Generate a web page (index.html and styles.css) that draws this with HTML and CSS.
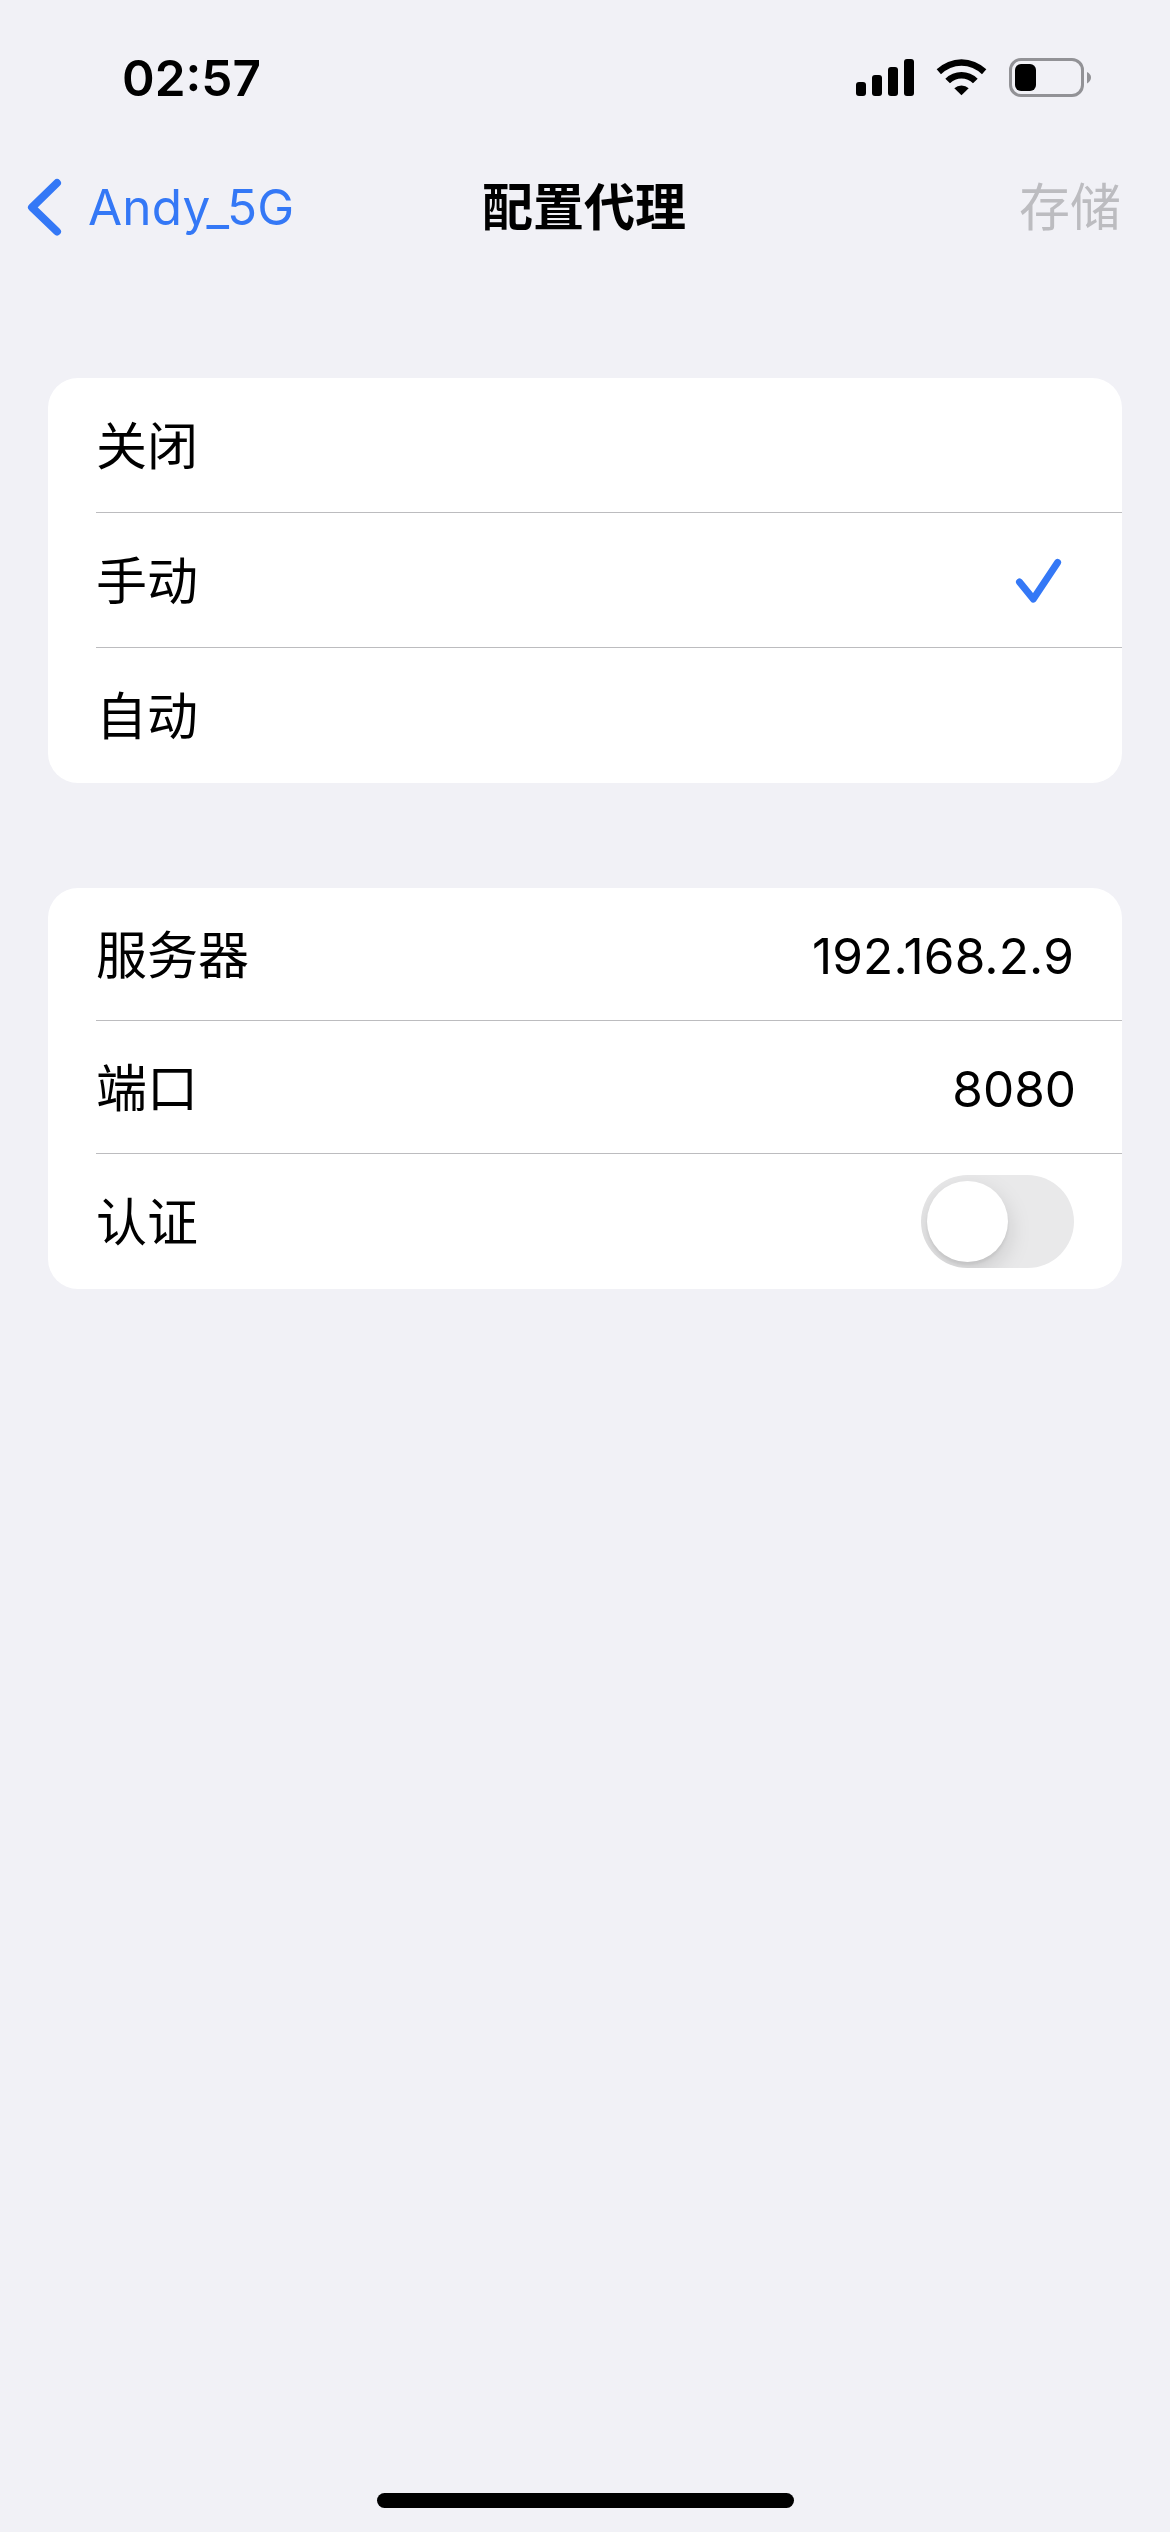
FILE: index.html
```html
<!DOCTYPE html>
<html lang="zh-CN">
<head>
<meta charset="utf-8">
<title>配置代理</title>
<link rel="stylesheet" href="styles.css">
</head>
<body>
<header class="status">
  <span class="time">02:57</span>
  <div class="indicators">
    <svg class="signal" viewBox="0 0 58 37"><rect x="0" y="23" width="10" height="14" rx="3"/><rect x="16" y="16" width="10" height="21" rx="3"/><rect x="32" y="8" width="10" height="29" rx="3"/><rect x="48" y="0" width="10" height="37" rx="3"/></svg>
    <svg class="wifi" viewBox="288 57 153 111"><path d="M290 88A107 107 0 0 1 439 88L426 103A86 86 0 0 0 303 103Z"/><path d="M316 116A69 69 0 0 1 413 116L399 130A48 48 0 0 0 330 130Z"/><path d="M343 145A31 31 0 0 1 386 145L364.500 166Z"/></svg>
    <svg class="battery" viewBox="0 0 83 39"><rect x="1.500" y="1.500" width="72" height="36" rx="10.500" fill="none" stroke="#929296" stroke-width="3"/><rect x="6" y="6" width="21" height="27" rx="6"/><path d="M78 14Q82 16 82 19.500T78 25.500Z" fill="#929296"/></svg>
  </div>
</header>
<nav class="navbar">
  <a class="back"><svg class="chevron" viewBox="0 0 36 58"><path d="M30 5L5 29.300L30 53.500"/></svg><span>Andy_5G</span></a>
  <h1 class="title">配置代理</h1>
  <span class="save">存储</span>
</nav>
<main class="content">
  <section class="group">
    <div class="row">关闭</div>
    <div class="row">手动<svg class="check" viewBox="0 0 46 46"><path d="M4.500 25L18.300 42L42.600 5.500"/></svg></div>
    <div class="row">自动</div>
  </section>
  <section class="group fields">
    <div class="row">服务器<span class="value ip">192.168.2.9</span></div>
    <div class="row">端口<span class="value port">8080</span></div>
    <div class="row">认证<span class="switch"><span class="knob"></span></span></div>
  </section>
</main>
<div class="home"></div>
</body>
</html>
```
FILE: styles.css
```css
* { box-sizing: border-box; }
body {
  margin: 0;
  width: 1170px;
  height: 2532px;
  display: flex;
  flex-direction: column;
  background: #f1f1f6;
  color: #000;
  font: 51px/60px Inter, "Noto Sans CJK SC", sans-serif;
  overflow: hidden;
}
svg { display: block; flex: none; overflow: visible; }
.status {
  flex: none;
  height: 140px;
  padding: 58px 78px 0 122px;
  display: flex;
  justify-content: space-between;
  align-items: flex-start;
}
.time { font-size: 49.5px; font-weight: 600; line-height: 40px; }
.indicators { display: flex; align-items: flex-start; }
.signal { width: 58px; height: 37px; margin: 1px 22px 0 0; }
.wifi { width: 51px; height: 37px; margin: 1px 22px 0 0; }
.battery { width: 83px; height: 39px; }
.navbar {
  flex: none;
  height: 134px;
  padding: 0 29px 0 27px;
  display: grid;
  grid-template-columns: 1fr auto 1fr;
  align-items: center;
}
.back { display: flex; align-items: center; color: #3478f6; font-size: 49.5px; }
.back span { margin-left: 25px; letter-spacing: .15px; }
.chevron { width: 36px; height: 58px; fill: none; stroke: #3478f6; stroke-width: 8; stroke-linecap: round; stroke-linejoin: round; }
.title { margin: 2px 0 0; font-size: 51px; font-weight: 700; }
.save { justify-self: end; margin: 2px 20px 0 0; color: #bcbcc0; }
.content { flex: 1; padding: 104px 48px 0; }
.group { background: #fff; border-radius: 30px; padding-left: 48px; }
.row {
  height: 135px;
  padding: 3px 48px 0 0;
  display: flex;
  align-items: center;
  justify-content: space-between;
  border-bottom: 1px solid #bcbcbf;
}
.row:last-child { padding-top: 2px; border-bottom: 0; }
.check { width: 46px; height: 46px; margin: -3px 13px 0 0; fill: none; stroke: #3478f6; stroke-width: 7; stroke-linecap: round; stroke-linejoin: round; }
.fields { margin-top: 105px; }
.fields .row { height: 133px; }
.fields .row:last-child { height: 135px; }
.value { font-size: 49.5px; }
.ip { letter-spacing: .15px; }
.port { margin-right: -2px; }
.switch { width: 153px; height: 93px; margin-top: -2px; padding: 6px; border-radius: 47px; background: #e9e9ea; overflow: hidden; }
.knob { display: block; width: 81px; height: 81px; border-radius: 50%; background: #fff; box-shadow: 0 9px 24px rgba(0, 0, 0, .15), 0 3px 3px rgba(0, 0, 0, .06); }
.home { width: 417px; height: 15px; margin: 0 auto 24px; border-radius: 8px; background: #000; flex: none; }
```
